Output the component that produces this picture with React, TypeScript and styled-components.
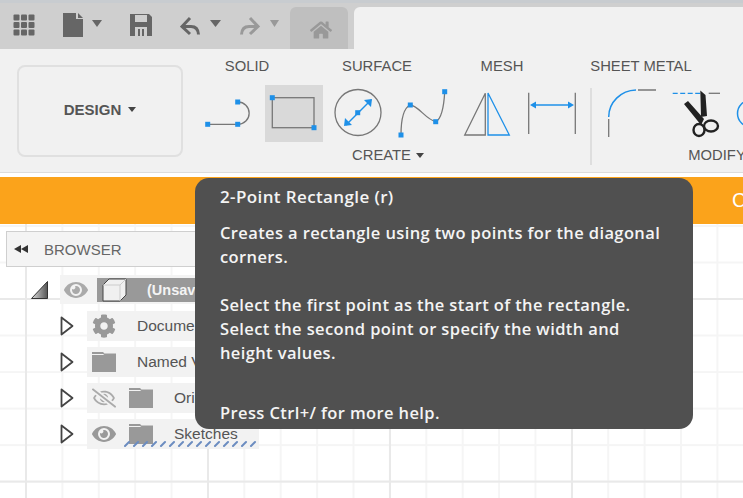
import React from 'react';
import styled, { createGlobalStyle } from 'styled-components';
import { FaCog, FaHome, FaEye, FaRegEyeSlash } from 'react-icons/fa';

const GlobalStyle = createGlobalStyle`
  html, body { margin: 0; padding: 0; background: #fff; overflow: hidden; }
  body { font-family: "Liberation Sans", Arial, sans-serif; }
`;

const Page = styled.div`
  position: relative;
  width: 743px;
  height: 498px;
  overflow: hidden;
  display: flex;
  flex-direction: column;
`;

const TopBar = styled.div`
  height: 49px;
  box-sizing: border-box;
  background: #cfcfcf;
  border-top: 3px solid #c8ccd0;
  display: flex;
  align-items: flex-end;
  padding-left: 13px;
`;

const QuickIcon = styled.div<{ $w: number }>`
  width: ${p => p.$w}px;
  height: 46px;
  flex: none;
  svg { display: block; }
`;

const HomeTab = styled.div`
  width: 58px;
  height: 42px;
  flex: none;
  background: #bfbfbf;
  border-radius: 6px 6px 0 0;
  color: #999;
  display: flex;
  align-items: center;
  justify-content: center;
  padding: 4px 0 0 4px;
  box-sizing: border-box;
  font-size: 22px;
`;

const ActiveTab = styled.div`
  flex: 1;
  height: 42px;
  margin-left: 6px;
  background: #f1f1f1;
  border-radius: 6px 0 0 0;
`;

const Ribbon = styled.div`
  height: 123px;
  background: #f1f1f1;
  border-bottom: 1px solid #dcdcdc;
  display: flex;
  padding-left: 17px;
`;

const DesignButton = styled.div`
  width: 166px;
  height: 92px;
  margin-top: 16px;
  padding-bottom: 3px;
  box-sizing: border-box;
  border: 2px solid #e0e0e0;
  border-radius: 8px;
  flex: none;
  display: flex;
  align-items: center;
  justify-content: center;
  gap: 7px;
  font-size: 15px;
  font-weight: bold;
  color: #555;
`;

const Caret = styled.span<{ $color?: string }>`
  width: 0;
  height: 0;
  border-left: 4.5px solid transparent;
  border-right: 4.5px solid transparent;
  border-top: 5px solid ${p => p.$color || '#444'};
`;

const RibbonBody = styled.div`
  margin-left: 22px;
  flex: none;
  width: 538px;
  display: flex;
  flex-direction: column;
`;

const Tabs = styled.div`
  display: flex;
  height: 36px;
  padding-top: 8px;
  box-sizing: border-box;
`;

const TabLabel = styled.div<{ $w: number }>`
  width: ${p => p.$w}px;
  flex: none;
  text-align: center;
  font-size: 14.8px;
  line-height: 18px;
  color: #555;
`;

const Tools = styled.div`
  display: flex;
  height: 57px;
`;

const ToolButton = styled.div<{ $w: number; $active?: boolean }>`
  width: ${p => p.$w}px;
  height: 57px;
  flex: none;
  background: ${p => (p.$active ? '#d9d9d9' : 'transparent')};
  svg { display: block; overflow: visible; }
`;

const Divider = styled.div`
  width: 2px;
  height: 77px;
  margin: 3px 6px 0 5px;
  flex: none;
  background: #dedede;
`;

const GroupLabels = styled.div`
  display: flex;
  height: 24px;
  margin-top: 1px;
`;

const GroupLabel = styled.div<{ $w: number }>`
  width: ${p => p.$w}px;
  flex: none;
  display: flex;
  justify-content: center;
  align-items: center;
  gap: 5px;
  font-size: 14.8px;
  line-height: 18px;
  color: #555;
  white-space: nowrap;
`;

const Gutter = styled.div`
  height: 4px;
  background: #fff;
`;

const Banner = styled.div`
  height: 47px;
  background: #fba31b;
  color: #fff;
  font-size: 20px;
  display: flex;
  align-items: center;
  padding-left: 732px;
  white-space: nowrap;
  overflow: hidden;
`;

const Canvas = styled.div`
  flex: 1;
  background-color: #fff;
  background-image:
    linear-gradient(to right, #e9e9e9 2px, transparent 2px),
    linear-gradient(to bottom, #e9e9e9 2px, transparent 2px),
    linear-gradient(to right, #f5f5f5 2px, transparent 2px),
    linear-gradient(to bottom, #f5f5f5 2px, transparent 2px);
  background-size: 182px 182.6px, 182px 182.6px, 36.4px 36.52px, 36.4px 36.52px;
  background-position: 25px 74px, 25px 74px, 25px 1px, 25px 1px;
  padding: 7px 0 0 6px;
`;

const BrowserBar = styled.div`
  width: 240px;
  height: 36px;
  box-sizing: border-box;
  background: #f4f4f4;
  border: 1px solid #cfcfcf;
  display: flex;
  align-items: center;
  padding-left: 7px;
  gap: 16px;
  font-size: 15px;
  color: #666;
  svg { flex: none; }
`;

const Tree = styled.div`
  display: flex;
  flex-direction: column;
`;

const RootRow = styled.div`
  display: flex;
  align-items: center;
  height: 29px;
  margin-top: 8px;
  padding-left: 25px;
  svg { flex: none; }
`;

const RootBand = styled.div`
  display: flex;
  align-items: center;
  margin-left: 12px;
  width: 200px;
  height: 29px;
  background: #f3f3f3;
  padding-left: 4px;
  box-sizing: border-box;
`;

const RootName = styled.div`
  margin-left: 9px;
  flex: 1;
  height: 24px;
  background: #999;
  color: #f4f4f4;
  font-weight: bold;
  font-size: 14.5px;
  line-height: 24px;
  display: flex;
  align-items: center;
  padding-left: 5px;
  gap: 20px;
  white-space: nowrap;
  overflow: hidden;
`;

const TreeRow = styled.div<{ $first?: boolean }>`
  display: flex;
  align-items: center;
  height: 30px;
  margin-top: ${p => (p.$first ? 7 : 6)}px;
  padding-left: 54px;
  svg { flex: none; }
`;

const Band = styled.div`
  margin-left: 13px;
  width: 172px;
  height: 30px;
  background: #f2f2f2;
  display: flex;
  align-items: center;
  padding-left: 5px;
  box-sizing: border-box;
  position: relative;
  color: #999;
`;

const RowIcon = styled.span`
  width: 37px;
  flex: none;
  display: flex;
  align-items: center;
`;

const RowText = styled.span`
  font-size: 15.5px;
  color: #555;
  white-space: nowrap;
  margin-left: 8px;
`;

const Squiggle = styled.svg`
  position: absolute;
  left: 37px;
  bottom: 2px;
`;

const Tooltip = styled.div`
  position: absolute;
  left: 195px;
  top: 178px;
  width: 498px;
  height: 251px;
  box-sizing: border-box;
  background: #505050;
  border-radius: 14px;
  color: #f4f4f4;
  padding: 7px 24px 7px 25px;
  font-family: "Open Sans", "Noto Sans", sans-serif;
  font-weight: 600;
  font-size: 16.5px;
  letter-spacing: 0.38px;
  line-height: 24px;
  white-space: nowrap;
`;

const TipTitle = styled.div`
  margin-bottom: 12px;
  font-size: 17px;
`;

const TipText = styled.div<{ $gap?: number }>`
  margin-top: ${p => p.$gap || 0}px;
`;

const BLUE = '#1e90e8';
const GRAY = '#777';

function Handle({ x, y }: { x: number; y: number }) {
  return <rect x={x - 2.5} y={y - 2.5} width={5} height={5} fill={BLUE} />;
}

// every tool icon is drawn in page pixels, the viewBox is the button's own box
function ToolIcon({ x, w, children }: { x: number; w: number; children: React.ReactNode }) {
  return (
    <svg width={w} height={57} viewBox={`${x} 85 ${w} 57`} fill="none">
      {children}
    </svg>
  );
}

function Chevron() {
  return (
    <svg width={14} height={20} viewBox="0 0 14 20" fill="none">
      <path d="M1.5 1.5 L12.5 10 L1.5 18.5 Z" fill="#fff" stroke="#444" strokeWidth={1.8} strokeLinejoin="round" />
    </svg>
  );
}

function Folder() {
  return (
    <svg width={24} height={20} viewBox="0 0 24 20" fill="#999">
      <path d="M0 0 H11 L13 2 H0 Z" />
      <path d="M0 3 H11 L13 1.5 H24 V20 H0 Z" />
    </svg>
  );
}

const squiggleMarks = Array.from({ length: 15 }, (_, i) => i * 9);

export default function App() {
  return (
    <Page>
      <GlobalStyle />
      <TopBar>
        <QuickIcon $w={50}>
          <svg width={50} height={46} viewBox="13 3 50 46">
            {[0, 1, 2].map(r =>
              [0, 1, 2].map(c => (
                <rect key={`${r}${c}`} x={13.5 + c * 7.5} y={14.5 + r * 7.5} width={6} height={6} rx={1} fill="#666" />
              ))
            )}
          </svg>
        </QuickIcon>
        <QuickIcon $w={67}>
          <svg width={67} height={46} viewBox="63 3 67 46">
            <path d="M63 13 H76 V19 H83 V37 H63 Z" fill="#666" />
            <path d="M78 13 L83 18 H78 Z" fill="#666" />
            <path d="M92 20 H102 L97 27 Z" fill="#666" />
          </svg>
        </QuickIcon>
        <QuickIcon $w={50}>
          <svg width={50} height={46} viewBox="130 3 50 46">
            <path d="M130 14 H149 L152 17 V36 H130 Z" fill="#666" />
            <rect x={135} y={15} width={12} height={7} fill="#cfcfcf" />
            <rect x={135} y={27} width={12} height={9} fill="#cfcfcf" />
            <rect x={138} y={29} width={6} height={7} fill="#666" />
            <rect x={140} y={29} width={2} height={7} fill="#cfcfcf" />
          </svg>
        </QuickIcon>
        <QuickIcon $w={60}>
          <svg width={60} height={46} viewBox="180 3 60 46" fill="none">
            <path d="M190 18 L182 26.5 L190 34 M182 26.5 H191 Q198 26.5 198.5 34.5" stroke="#666" strokeWidth={3} />
            <path d="M210 20 H221 L215.5 27 Z" fill="#666" />
          </svg>
        </QuickIcon>
        <QuickIcon $w={50}>
          <svg width={50} height={46} viewBox="240 3 50 46" fill="none">
            <path d="M250 18 L258 26.5 L250 34 M258 26.5 H249 Q242 26.5 241.5 34.5" stroke="#999" strokeWidth={3} />
            <path d="M270 20 H279 L274.5 27 Z" fill="#999" />
          </svg>
        </QuickIcon>
        <HomeTab>
          <FaHome />
        </HomeTab>
        <ActiveTab />
      </TopBar>

      <Ribbon>
        <DesignButton>
          DESIGN <Caret />
        </DesignButton>
        <RibbonBody>
          <Tabs>
            <TabLabel $w={84}>SOLID</TabLabel>
            <TabLabel $w={176}>SURFACE</TabLabel>
            <TabLabel $w={74}>MESH</TabLabel>
            <TabLabel $w={204}>SHEET METAL</TabLabel>
          </Tabs>
          <Tools>
            <ToolButton $w={60}>
              <ToolIcon x={205} w={60}>
                <path d="M208 124.3 H237 M238 102 A11 11 0 0 1 238 124.3" stroke={GRAY} strokeWidth={1.3} />
                <Handle x={207.7} y={124.3} />
                <Handle x={237.7} y={124.3} />
                <Handle x={237.7} y={102} />
              </ToolIcon>
            </ToolButton>
            <ToolButton $w={58} $active>
              <ToolIcon x={265} w={58}>
                <rect x={272.3} y={97.7} width={41.7} height={30} stroke={GRAY} strokeWidth={1.3} />
                <Handle x={272.3} y={97.7} />
                <Handle x={314} y={127.7} />
              </ToolIcon>
            </ToolButton>
            <ToolButton $w={69}>
              <ToolIcon x={323} w={69}>
                <circle cx={358} cy={112.5} r={23} stroke={GRAY} strokeWidth={1.3} />
                <path d="M346 125 L371 100" stroke={BLUE} strokeWidth={1.5} />
                <path d="M372 99 L371 107 L364 100 Z M344 126 L345 118 L352 125 Z" fill={BLUE} />
                <Handle x={357.7} y={112.7} />
              </ToolIcon>
            </ToolButton>
            <ToolButton $w={62}>
              <ToolIcon x={392} w={62}>
                <path d="M401 135 C401 120 404 108 410 105 C418 105 426 120 436 121.7 C442 118 444 105 444.7 92" stroke={GRAY} strokeWidth={1.3} />
                <Handle x={444.7} y={91.7} />
                <Handle x={435.7} y={121.7} />
                <Handle x={410.3} y={105} />
                <Handle x={401} y={135} />
              </ToolIcon>
            </ToolButton>
            <ToolButton $w={65}>
              <ToolIcon x={454} w={65}>
                <path d="M485.3 93.3 L464.7 135 H485.3 Z" stroke={GRAY} strokeWidth={1.3} />
                <path d="M488 93 V135 H509.3 Z" stroke={BLUE} strokeWidth={1.3} />
              </ToolIcon>
            </ToolButton>
            <ToolButton $w={66}>
              <ToolIcon x={519} w={66}>
                <path d="M528.7 92.7 V134 M575.3 92.7 V134" stroke={GRAY} strokeWidth={1.3} />
                <path d="M533 105 H571" stroke={BLUE} strokeWidth={1.3} />
                <path d="M530 105 L536 101.5 V108.5 Z M574 105 L568 101.5 V108.5 Z" fill={BLUE} />
              </ToolIcon>
            </ToolButton>
            <Divider />
            <ToolButton $w={66}>
              <ToolIcon x={599} w={66}>
                <path d="M609.7 119 V137 M639 90 H657" stroke={GRAY} strokeWidth={1.3} />
                <path d="M609.7 117 A28 27 0 0 1 637 90" stroke={BLUE} strokeWidth={1.5} />
              </ToolIcon>
            </ToolButton>
            <ToolButton $w={66}>
              <ToolIcon x={665} w={66}>
                <path d="M673.7 93.3 H702" stroke={BLUE} strokeWidth={1.3} strokeDasharray="5 2.5" />
                <path d="M709.7 93.3 H721" stroke={GRAY} strokeWidth={1.3} />
                <path d="M685 104 L689 101 L705 119 L702 125 Z M701.3 90.5 L706.5 95 L708 116 L702 117 Z" fill="#222" />
                <ellipse cx={712} cy={126} rx={7} ry={5.5} stroke="#222" strokeWidth={2.4} />
                <ellipse cx={700} cy={130} rx={5.5} ry={6} stroke="#222" strokeWidth={2.4} />
              </ToolIcon>
            </ToolButton>
            <ToolButton $w={12}>
              <ToolIcon x={731} w={12}>
                <circle cx={752} cy={113.5} r={13.5} stroke={BLUE} strokeWidth={1.5} />
              </ToolIcon>
            </ToolButton>
          </Tools>
          <GroupLabels>
            <GroupLabel $w={366}>
              CREATE <Caret />
            </GroupLabel>
            <GroupLabel $w={292}>MODIFY</GroupLabel>
          </GroupLabels>
        </RibbonBody>
      </Ribbon>
      <Gutter />

      <Banner>Ch</Banner>

      <Canvas>
        <BrowserBar>
          <svg width={14} height={8} viewBox="0 0 14 8" fill="#333">
            <path d="M0 4 L7 0 V8 Z M7 4 L14 0 V8 Z" />
          </svg>
          BROWSER
        </BrowserBar>
        <Tree>
          <RootRow>
            <svg width={17} height={18} viewBox="0 0 17 18">
              <defs>
                <linearGradient id="expanded" x1="0" y1="0" x2="1" y2="0">
                  <stop offset="0" stopColor="#ddd" />
                  <stop offset="1" stopColor="#555" />
                </linearGradient>
              </defs>
              <path d="M0.5 17.5 L16.5 0.5 V17.5 Z" fill="url(#expanded)" stroke="#333" strokeWidth={1} />
            </svg>
            <RootBand>
              <FaEye size={24} color="#aaa" style={{ flex: 'none' }} />
              <RootName>
                <svg width={25} height={24} viewBox="0 0 25 24" style={{ flex: 'none' }}>
                  <path d="M1 7 L7 1 H24 V17 L18 23 H1 Z" fill="#f0f0f0" stroke="#444" strokeWidth={1} strokeLinejoin="round" />
                  <path d="M1 7 H18 V23 M18 7 L24 1" fill="none" stroke="#ccc" strokeWidth={1} />
                </svg>
                (Unsaved)
              </RootName>
            </RootBand>
          </RootRow>
          <TreeRow $first>
            <Chevron />
            <Band>
              <RowIcon><FaCog size={24} /></RowIcon>
              <RowText>Document Settings</RowText>
            </Band>
          </TreeRow>
          <TreeRow>
            <Chevron />
            <Band>
              <RowIcon><Folder /></RowIcon>
              <RowText>Named Views</RowText>
            </Band>
          </TreeRow>
          <TreeRow>
            <Chevron />
            <Band>
              <RowIcon><FaRegEyeSlash size={24} color="#aaa" /></RowIcon>
              <RowIcon><Folder /></RowIcon>
              <RowText>Origin</RowText>
            </Band>
          </TreeRow>
          <TreeRow>
            <Chevron />
            <Band>
              <RowIcon><FaEye size={24} /></RowIcon>
              <RowIcon><Folder /></RowIcon>
              <RowText>Sketches</RowText>
              <Squiggle width={133} height={7} viewBox="0 0 133 7">
                {squiggleMarks.map(x => (
                  <path key={x} d={`M${x + 1} 6 L${x + 5} 2`} stroke="#6b8cc0" strokeWidth={2} strokeLinecap="round" />
                ))}
              </Squiggle>
            </Band>
          </TreeRow>
        </Tree>
      </Canvas>

      <Tooltip>
        <TipTitle>2-Point Rectangle (r)</TipTitle>
        <TipText>Creates a rectangle using two points for the diagonal<br />corners.</TipText>
        <TipText $gap={24}>
          Select the first point as the start of the rectangle.<br />
          Select the second point or specify the width and<br />
          height values.
        </TipText>
        <TipText $gap={36}>Press Ctrl+/ for more help.</TipText>
      </Tooltip>
    </Page>
  );
}
